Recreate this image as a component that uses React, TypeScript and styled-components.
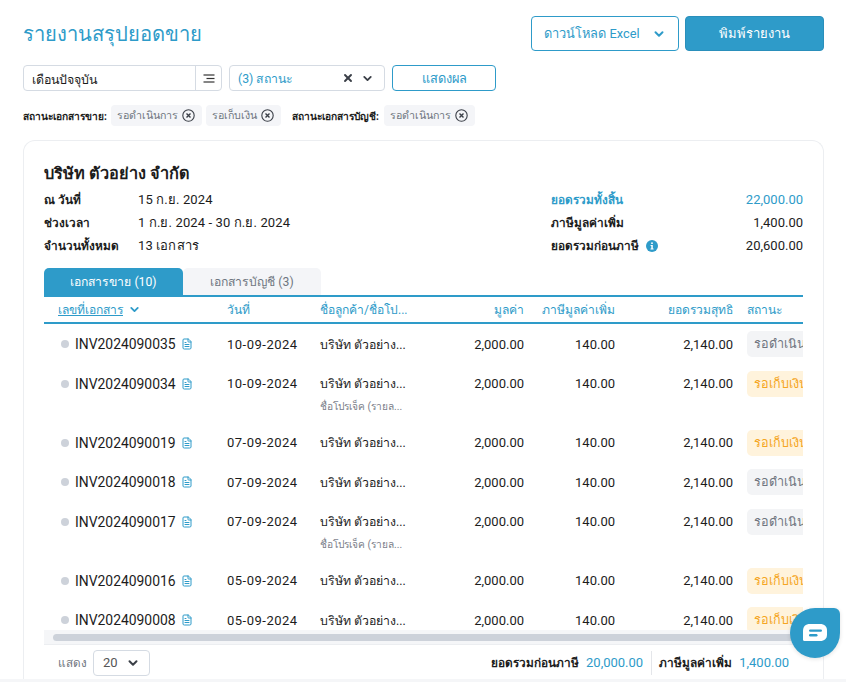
import React from 'react'
import styled, { createGlobalStyle } from 'styled-components'
import { ChevronDown, X, FileText } from 'lucide-react'

const BLUE = '#2e9bc9'
const BORDER = '#d5dbe3'

const GlobalStyle = createGlobalStyle`
  html, body {
    margin: 0;
    padding: 0;
    background: #fff;
  }
  body {
    font-family: Roboto, "Noto Sans", "Open Sans", sans-serif;
    font-size: 13px;
    color: #1c1c1c;
  }
  * { box-sizing: border-box; }
`

const Page = styled.div`
  position: relative;
  height: 682px;
  overflow: hidden;
  padding: 16px 22px 0 23px;
`

const TopBar = styled.header`
  display: flex;
  justify-content: space-between;
  align-items: center;
  height: 35px;
`

const Title = styled.h1`
  margin: 0;
  font-size: 20.2px;
  font-weight: 400;
  color: ${BLUE};
`

const Actions = styled.div`
  display: flex;
  gap: 6px;
`

const OutlineButton = styled.button<{ $w: number; $h: number }>`
  display: flex;
  align-items: center;
  justify-content: center;
  gap: 12px;
  width: ${p => p.$w}px;
  height: ${p => p.$h}px;
  padding: 0;
  border: 1px solid ${BLUE};
  border-radius: 4px;
  background: #fff;
  color: ${BLUE};
  font: inherit;
  font-size: 12.8px;
`

const SolidButton = styled.button`
  width: 139px;
  height: 35px;
  border: 1px solid #2a8fbb;
  border-radius: 4px;
  background: ${BLUE};
  color: #fff;
  font: inherit;
`

const Filters = styled.div`
  display: flex;
  gap: 7px;
  margin-top: 14px;
`

const PeriodBox = styled.div`
  display: flex;
  width: 199px;
  height: 26px;
  border: 1px solid ${BORDER};
  border-radius: 4px;
`

const PeriodText = styled.div`
  flex: 1;
  padding: 1px 0 0 8px;
  font-size: 12.4px;
  line-height: 25px;
`

const PeriodIcon = styled.div`
  display: flex;
  align-items: center;
  justify-content: center;
  width: 26px;
  border-left: 1px solid ${BORDER};
`

const StatusSelect = styled.div`
  display: flex;
  align-items: center;
  width: 156px;
  height: 26px;
  padding: 0 10px 0 8px;
  border: 1px solid ${BORDER};
  border-radius: 4px;
  color: ${BLUE};
  font-size: 12.3px;
`

const SelectLabel = styled.span`
  flex: 1;
`

const ChipRow = styled.div`
  display: flex;
  align-items: center;
  gap: 4px;
  margin-top: 14px;
  font-size: 10.2px;
`

const ChipLabel = styled.b<{ $gap?: number }>`
  font-weight: 700;
  margin-left: ${p => p.$gap ?? 0}px;
  margin-right: ${p => (p.$gap ? 1 : 0)}px;
`

const Chip = styled.span`
  display: flex;
  align-items: center;
  gap: 4px;
  height: 21px;
  padding: 0 7px 0 6px;
  border-radius: 4px;
  background: #f4f5f8;
  color: #6f7580;
  font-size: 10.7px;
`

const Card = styled.section`
  display: flex;
  flex-direction: column;
  height: 539px;
  margin-top: 14px;
  padding: 22px 20px 0;
  border: 1px solid #eceef1;
  border-bottom: 0;
  border-radius: 12px 12px 0 0;
`

const Summary = styled.div`
  display: flex;
  justify-content: space-between;
  height: 105px;
`

const Company = styled.h2`
  margin: 0 0 3px;
  font-size: 16.3px;
  font-weight: 700;
  line-height: 22px;
`

const InfoRow = styled.div`
  display: flex;
  height: 23px;
  align-items: center;
`

const InfoLabel = styled.span`
  width: 94px;
  font-size: 11.8px;
  font-weight: 700;
`

const InfoValue = styled.span`
  letter-spacing: 0.12px;
`

const Totals = styled.div`
  width: 252px;
  padding-top: 25px;
`

const TotalRow = styled.div<{ $accent?: boolean }>`
  display: flex;
  justify-content: space-between;
  align-items: center;
  height: 23px;
  color: ${p => (p.$accent ? BLUE : 'inherit')};
`

const TotalLabel = styled.span`
  display: flex;
  align-items: center;
  gap: 7px;
  font-size: 11.8px;
  font-weight: 700;
`

const Tabs = styled.div`
  display: flex;
  height: 27px;
`

const Tab = styled.div<{ $active?: boolean }>`
  width: ${p => (p.$active ? 139 : 138)}px;
  font-size: 12.2px;
  line-height: 29px;
  text-align: center;
  border-radius: 5px 5px 0 0;
  background: ${p => (p.$active ? BLUE : '#f4f5f8')};
  color: ${p => (p.$active ? '#fff' : '#6f7580')};
`

const COLUMNS = '183px 93px 100px 104px 91px 118px 70px'

const HeadRow = styled.div`
  display: grid;
  grid-template-columns: ${COLUMNS};
  align-items: center;
  height: 29px;
  border-top: 2px solid ${BLUE};
  border-bottom: 2px solid ${BLUE};
  color: ${BLUE};
  font-size: 12.1px;
`

const HeadCell = styled.div<{ $right?: boolean; $pad?: number }>`
  display: flex;
  align-items: center;
  gap: 5px;
  justify-content: ${p => (p.$right ? 'flex-end' : 'flex-start')};
  padding-left: ${p => p.$pad ?? 0}px;
`

const SortLink = styled.span`
  text-decoration: underline;
`

const Body = styled.div`
  height: 306px;
  overflow: hidden;
`

const Row = styled.div`
  display: grid;
  grid-template-columns: ${COLUMNS};
  padding: 7px 0 6.5px;
`

const Cell = styled.div<{ $right?: boolean; $pad?: number }>`
  display: flex;
  align-items: center;
  height: 26px;
  justify-content: ${p => (p.$right ? 'flex-end' : 'flex-start')};
  padding-left: ${p => p.$pad ?? 0}px;
  white-space: nowrap;
`

const DateText = styled.span`
  letter-spacing: 0.5px;
`

const CustomerName = styled.span`
  font-size: 12.3px;
`

const Dot = styled.i`
  width: 8px;
  height: 8px;
  margin: 0 6px 0 17px;
  border-radius: 50%;
  background: #cdd2da;
`

const DocNo = styled.span`
  font-size: 13.9px;
  margin-right: 5px;
`

const Customer = styled.div`
  grid-column: 3;
`

const Project = styled.div`
  margin-top: 1.5px;
  height: 18px;
  line-height: 18px;
  font-size: 10.2px;
  color: #7b808a;
`

const Status = styled.span<{ $tone: 'wait' | 'bill' }>`
  flex: none;
  height: 26px;
  width: 70px;
  padding-left: 7px;
  line-height: 26px;
  font-size: 12.6px;
  border-radius: 5px;
  overflow: hidden;
  background: ${p => (p.$tone === 'wait' ? '#f3f4f6' : '#fff3dc')};
  color: ${p => (p.$tone === 'wait' ? '#6f7580' : '#f5a623')};
`

const ScrollTrack = styled.div`
  height: 14px;
  padding: 4px 8px 3px 9px;
  background: #f5f6f8;
`

const ScrollThumb = styled.div`
  height: 7px;
  border-radius: 4px;
  background: #cdd2da;
`

const Footer = styled.footer`
  display: flex;
  align-items: center;
  justify-content: space-between;
  height: 35px;
  padding: 1px 14px 0;
  border-top: 1px solid #eceef1;
`

const PageSize = styled.div`
  display: flex;
  align-items: center;
  gap: 6px;
  font-size: 11.7px;
  color: #6f7580;
`

const SizeSelect = styled.div`
  display: flex;
  align-items: center;
  justify-content: space-between;
  width: 57px;
  height: 26px;
  padding: 0 9px;
  border: 1px solid ${BORDER};
  border-radius: 4px;
  font-size: 13px;
  color: #555;
`

const FootTotals = styled.div`
  display: flex;
  align-items: center;
  height: 24px;
`

const FootItem = styled.div<{ $divider?: boolean }>`
  display: flex;
  align-items: center;
  gap: 7px;
  padding-left: ${p => (p.$divider ? 7 : 0)}px;
  margin-left: ${p => (p.$divider ? 8 : 0)}px;
  line-height: 24px;
  border-left: ${p => (p.$divider ? '1px solid #e4e6ea' : '0')};
  b { font-size: 11.8px; font-weight: 700; }
  span { color: ${BLUE}; }
`

const BottomStrip = styled.div`
  position: absolute;
  left: 0;
  right: 0;
  bottom: 0;
  height: 3px;
  background: #f5f6f8;
`

const ChatButton = styled.button`
  position: absolute;
  top: 608px;
  left: 790px;
  display: flex;
  align-items: center;
  justify-content: center;
  width: 50px;
  height: 50px;
  padding: 0;
  border: 0;
  border-radius: 50% 6px 50% 50%;
  background: ${BLUE};
  box-shadow: 0 1px 4px rgba(0, 0, 0, 0.12);
`

const SortIcon = () => (
  <svg width="12" height="9" viewBox="0 0 12 9" fill="none" stroke="#333" strokeWidth="1.2">
    <path d="M0.5 1H11.5" />
    <path d="M3.5 4.5H11.5" />
    <path d="M0.5 8H11.5" />
  </svg>
)

const XCircle = () => (
  <svg width="13" height="13" viewBox="0 0 13 13" fill="none" stroke="#3a3f47" strokeWidth="1.1">
    <circle cx="6.5" cy="6.5" r="5.7" />
    <path d="M4.5 4.5L8.5 8.5M8.5 4.5L4.5 8.5" strokeWidth="1.4" />
  </svg>
)

const InfoIcon = () => (
  <svg width="12" height="12" viewBox="0 0 12 12">
    <circle cx="6" cy="6" r="6" fill={BLUE} />
    <rect x="5.2" y="2.4" width="1.6" height="1.6" fill="#fff" />
    <path d="M4.6 5H6.8V8.6H7.6V9.6H4.5V8.6H5.3V6H4.6Z" fill="#fff" />
  </svg>
)

const ChatIcon = () => (
  <svg width="26" height="21" viewBox="0 0 26 21">
    <path d="M8 1H18C22.5 1 25 3.5 25 7.5V11.5C25 15.5 22.5 18 18 18H2.2C1.4 18 1 17.4 1 16.8V8C1 3.5 3.5 1 8 1Z" fill="#fff" />
    <rect x="7" y="6.4" width="13" height="2.4" rx="1.2" fill={BLUE} />
    <rect x="7" y="11" width="8.5" height="2.4" rx="1.2" fill={BLUE} />
  </svg>
)

type RowData = { no: string; date: string; tone: 'wait' | 'bill'; project?: boolean }

const rows: RowData[] = [
  { no: 'INV2024090035', date: '10-09-2024', tone: 'wait' },
  { no: 'INV2024090034', date: '10-09-2024', tone: 'bill', project: true },
  { no: 'INV2024090019', date: '07-09-2024', tone: 'bill' },
  { no: 'INV2024090018', date: '07-09-2024', tone: 'wait' },
  { no: 'INV2024090017', date: '07-09-2024', tone: 'wait', project: true },
  { no: 'INV2024090016', date: '05-09-2024', tone: 'bill' },
  { no: 'INV2024090008', date: '05-09-2024', tone: 'bill' },
]

export default function App() {
  return (
    <Page>
      <GlobalStyle />
      <TopBar>
        <Title>รายงานสรุปยอดขาย</Title>
        <Actions>
          <OutlineButton $w={148} $h={35}>
            ดาวน์โหลด Excel
            <ChevronDown size={14} strokeWidth={3.4} />
          </OutlineButton>
          <SolidButton>พิมพ์รายงาน</SolidButton>
        </Actions>
      </TopBar>

      <Filters>
        <PeriodBox>
          <PeriodText>เดือนปัจจุบัน</PeriodText>
          <PeriodIcon><SortIcon /></PeriodIcon>
        </PeriodBox>
        <StatusSelect>
          <SelectLabel>(3) สถานะ</SelectLabel>
          <X size={12} strokeWidth={3.8} color="#3a3f47" />
          <ChevronDown size={13} strokeWidth={3.4} color="#3a3f47" style={{ marginLeft: 7 }} />
        </StatusSelect>
        <OutlineButton $w={104} $h={26}>แสดงผล</OutlineButton>
      </Filters>

      <ChipRow>
        <ChipLabel>สถานะเอกสารขาย:</ChipLabel>
        <Chip>รอดำเนินการ <XCircle /></Chip>
        <Chip>รอเก็บเงิน <XCircle /></Chip>
        <ChipLabel $gap={7}>สถานะเอกสารบัญชี:</ChipLabel>
        <Chip>รอดำเนินการ <XCircle /></Chip>
      </ChipRow>

      <Card>
        <Summary>
          <div>
            <Company>บริษัท ตัวอย่าง จำกัด</Company>
            <InfoRow><InfoLabel>ณ วันที่</InfoLabel><InfoValue>15 ก.ย. 2024</InfoValue></InfoRow>
            <InfoRow><InfoLabel>ช่วงเวลา</InfoLabel><InfoValue>1 ก.ย. 2024 - 30 ก.ย. 2024</InfoValue></InfoRow>
            <InfoRow><InfoLabel>จำนวนทั้งหมด</InfoLabel><InfoValue>13 เอกสาร</InfoValue></InfoRow>
          </div>
          <Totals>
            <TotalRow $accent><TotalLabel>ยอดรวมทั้งสิ้น</TotalLabel>22,000.00</TotalRow>
            <TotalRow><TotalLabel>ภาษีมูลค่าเพิ่ม</TotalLabel>1,400.00</TotalRow>
            <TotalRow><TotalLabel>ยอดรวมก่อนภาษี <InfoIcon /></TotalLabel>20,600.00</TotalRow>
          </Totals>
        </Summary>

        <Tabs>
          <Tab $active>เอกสารขาย (10)</Tab>
          <Tab>เอกสารบัญชี (3)</Tab>
        </Tabs>

        <HeadRow>
          <HeadCell $pad={14}><SortLink>เลขที่เอกสาร</SortLink><ChevronDown size={13} strokeWidth={3.4} /></HeadCell>
          <HeadCell>วันที่</HeadCell>
          <HeadCell>ชื่อลูกค้า/ชื่อโป...</HeadCell>
          <HeadCell $right>มูลค่า</HeadCell>
          <HeadCell $right>ภาษีมูลค่าเพิ่ม</HeadCell>
          <HeadCell $right>ยอดรวมสุทธิ</HeadCell>
          <HeadCell $pad={14}>สถานะ</HeadCell>
        </HeadRow>

        <Body>
          {rows.map(r => (
            <Row key={r.no}>
              <Cell>
                <Dot />
                <DocNo>{r.no}</DocNo>
                <FileText size={12} color={BLUE} />
              </Cell>
              <Cell><DateText>{r.date}</DateText></Cell>
              <Cell><CustomerName>บริษัท ตัวอย่าง...</CustomerName></Cell>
              <Cell $right>2,000.00</Cell>
              <Cell $right>140.00</Cell>
              <Cell $right>2,140.00</Cell>
              <Cell $pad={14}>
                <Status $tone={r.tone}>{r.tone === 'wait' ? 'รอดำเนินการ' : 'รอเก็บเงิน'}</Status>
              </Cell>
              {r.project && (
                <Customer>
                  <Project>ชื่อโปรเจ็ค (รายล...</Project>
                </Customer>
              )}
            </Row>
          ))}
        </Body>

        <ScrollTrack><ScrollThumb /></ScrollTrack>

        <Footer>
          <PageSize>
            แสดง
            <SizeSelect>20 <ChevronDown size={14} strokeWidth={3.4} color="#3a3f47" /></SizeSelect>
          </PageSize>
          <FootTotals>
            <FootItem><b>ยอดรวมก่อนภาษี</b><span>20,000.00</span></FootItem>
            <FootItem $divider><b>ภาษีมูลค่าเพิ่ม</b><span>1,400.00</span></FootItem>
          </FootTotals>
        </Footer>
      </Card>

      <BottomStrip />
      <ChatButton aria-label="chat"><ChatIcon /></ChatButton>
    </Page>
  )
}
